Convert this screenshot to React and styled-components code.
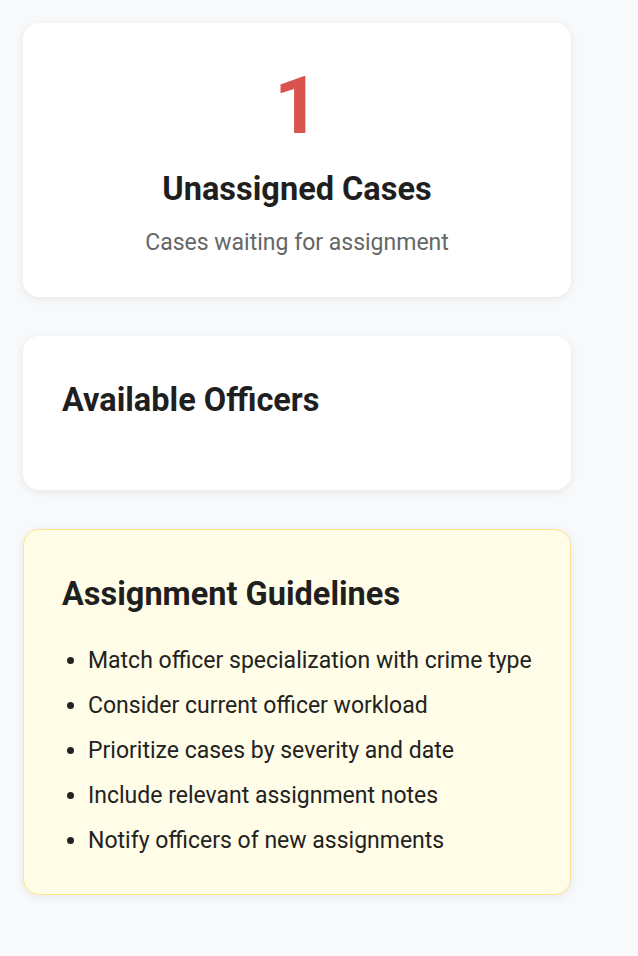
import React from 'react';
import styled, { createGlobalStyle } from 'styled-components';

const GlobalStyle = createGlobalStyle`
  body {
    margin: 0;
    background-color: #f8f9fa;
    font-family: Roboto, "Liberation Sans", sans-serif;
    color: #212121;
  }
`;

const Page = styled.main`
  display: flex;
  flex-direction: column;
  gap: 39px;
  padding: 23px;
  width: 548px;
`;

const Card = styled.section`
  box-sizing: border-box;
  background-color: ${(p) => (p.$note ? '#fffde7' : '#fff')};
  border: ${(p) => (p.$note ? '1px solid #fde58f' : 'none')};
  border-radius: 16px;
  box-shadow: 0 2px 8px rgba(0, 0, 0, 0.08);
  width: 548px;
`;

const StatCard = styled(Card)`
  display: flex;
  flex-direction: column;
  align-items: center;
  text-align: center;
  padding: 43px 40px 39px;
`;

const StatNumber = styled.div`
  font-size: 80px;
  line-height: 80px;
  font-weight: 700;
  color: #d9534f;
`;

const StatTitle = styled.h2`
  margin: 23px 0 0;
  font-size: 32.5px;
  line-height: 40px;
  font-weight: 700;
  color: #1f1f1f;
`;

const StatText = styled.p`
  margin: 19px 0 0;
  font-size: 23px;
  line-height: 30px;
  color: #666;
`;

const SectionCard = styled(Card)`
  padding: 44px 39px 70px;
`;

const NoteCard = styled(Card)`
  padding: 44px 38px 36px;
`;

const SectionTitle = styled.h2`
  margin: 0;
  font-size: 32.5px;
  line-height: 40px;
  font-weight: 700;
  color: #1f1f1f;
`;

const GuideList = styled.ul`
  margin: 29px 0 0;
  padding-left: 26px;
  display: flex;
  flex-direction: column;
  gap: 10px;
`;

const GuideItem = styled.li`
  font-size: 23px;
  line-height: 35px;
  color: #222;
`;

const guidelines = [
  'Match officer specialization with crime type',
  'Consider current officer workload',
  'Prioritize cases by severity and date',
  'Include relevant assignment notes',
  'Notify officers of new assignments',
];

export default function App() {
  return (
    <>
      <GlobalStyle />
      <Page>
        <StatCard>
          <StatNumber>1</StatNumber>
          <StatTitle>Unassigned Cases</StatTitle>
          <StatText>Cases waiting for assignment</StatText>
        </StatCard>
        <SectionCard>
          <SectionTitle>Available Officers</SectionTitle>
        </SectionCard>
        <NoteCard $note>
          <SectionTitle>Assignment Guidelines</SectionTitle>
          <GuideList>
            {guidelines.map((g) => (
              <GuideItem key={g}>{g}</GuideItem>
            ))}
          </GuideList>
        </NoteCard>
      </Page>
    </>
  );
}
